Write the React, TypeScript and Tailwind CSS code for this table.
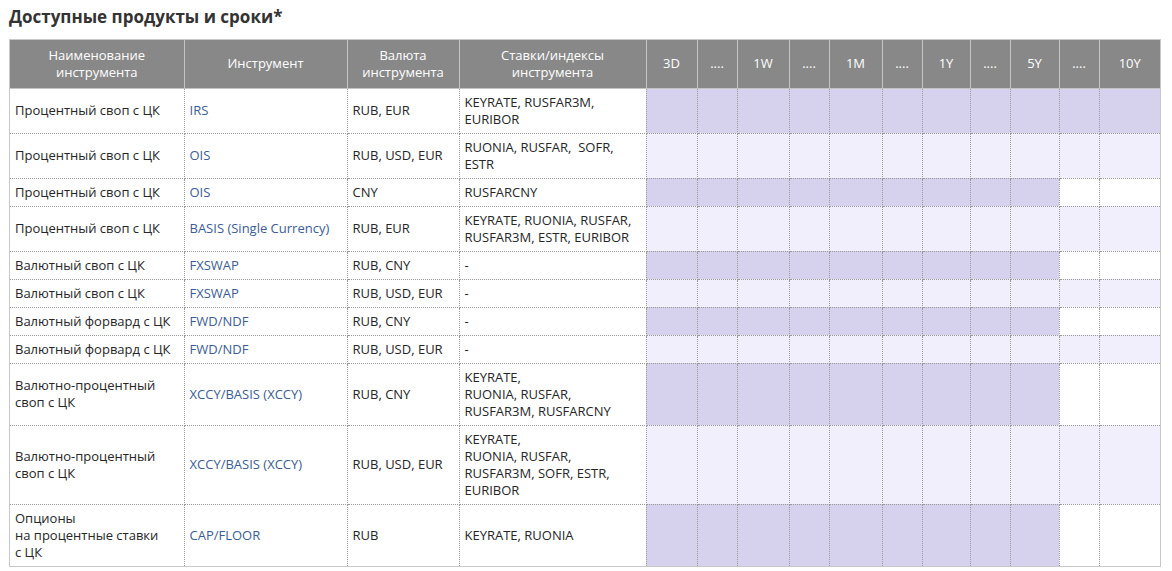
import React from 'react'

type Row = {
  name: string[]
  tool: string
  cur: string
  rates: string[]
  full: boolean // purple row with all tenors (incl. last two)
  shade: 'dark' | 'light'
}

const tenors = ['3D', '....', '1W', '....', '1M', '....', '1Y', '....', '5Y', '....', '10Y']
const tenorWidths = [51, 40, 52, 40, 53, 40, 48, 40, 49, 40, 61]

const rows: Row[] = [
  { name: ['Процентный своп с ЦК'], tool: 'IRS', cur: 'RUB, EUR', rates: ['KEYRATE, RUSFAR3M,', 'EURIBOR'], full: true, shade: 'dark' },
  { name: ['Процентный своп с ЦК'], tool: 'OIS', cur: 'RUB, USD, EUR', rates: ['RUONIA, RUSFAR,  SOFR,', 'ESTR'], full: true, shade: 'light' },
  { name: ['Процентный своп с ЦК'], tool: 'OIS', cur: 'CNY', rates: ['RUSFARCNY'], full: false, shade: 'dark' },
  { name: ['Процентный своп с ЦК'], tool: 'BASIS (Single Currency)', cur: 'RUB, EUR', rates: ['KEYRATE, RUONIA, RUSFAR,', 'RUSFAR3M, ESTR, EURIBOR'], full: true, shade: 'light' },
  { name: ['Валютный своп с ЦК'], tool: 'FXSWAP', cur: 'RUB, CNY', rates: ['-'], full: false, shade: 'dark' },
  { name: ['Валютный своп с ЦК'], tool: 'FXSWAP', cur: 'RUB, USD, EUR', rates: ['-'], full: true, shade: 'light' },
  { name: ['Валютный форвард с ЦК'], tool: 'FWD/NDF', cur: 'RUB, CNY', rates: ['-'], full: false, shade: 'dark' },
  { name: ['Валютный форвард с ЦК'], tool: 'FWD/NDF', cur: 'RUB, USD, EUR', rates: ['-'], full: true, shade: 'light' },
  { name: ['Валютно-процентный', 'своп с ЦК'], tool: 'XCCY/BASIS (XCCY)', cur: 'RUB, CNY', rates: ['KEYRATE,', 'RUONIA, RUSFAR,', 'RUSFAR3M, RUSFARCNY'], full: false, shade: 'dark' },
  { name: ['Валютно-процентный', 'своп с ЦК'], tool: 'XCCY/BASIS (XCCY)', cur: 'RUB, USD, EUR', rates: ['KEYRATE,', 'RUONIA, RUSFAR,', 'RUSFAR3M, SOFR, ESTR,', 'EURIBOR'], full: true, shade: 'light' },
  { name: ['Опционы', 'на процентные ставки', 'с ЦК'], tool: 'CAP/FLOOR', cur: 'RUB', rates: ['KEYRATE, RUONIA'], full: false, shade: 'dark' },
]

function Lines({ items }: { items: string[] }) {
  return (
    <>
      {items.map((l, i) => (
        <div key={i} className="whitespace-pre">{l}</div>
      ))}
    </>
  )
}

export default function App() {
  const th = 'border border-[#c4c4c4] font-normal text-white text-center align-middle px-1 py-[6px]'
  const td = 'border border-dotted border-[#9a9a9a] align-middle px-[5px] py-[5px]'

  return (
    <div className="w-[1172px] h-[571px] bg-white overflow-hidden text-[13px] leading-[17px] text-[#262626]" style={{ fontFamily: '"Open Sans", "Noto Sans", sans-serif' }}>
      <h2 className="text-[17px] leading-[24px] font-bold text-[#333] pl-[9px] pt-[5px] h-[39px]">Доступные продукты и сроки*</h2>

      <div className="ml-[9px] w-[1152px] border border-[#c8c8c8]">
        <table className="w-[1150px] table-fixed border-collapse">
          <colgroup>
            <col className="w-[174px]" />
            <col className="w-[163px]" />
            <col className="w-[112px]" />
            <col className="w-[187px]" />
            {tenorWidths.map((w, i) => (
              <col key={i} style={{ width: w }} />
            ))}
          </colgroup>
          <thead>
            <tr className="bg-[#888888] h-[48px]">
              <th className={th + ' border-l-0 border-t-0'}>Наименование<br />инструмента</th>
              <th className={th + ' border-t-0'}>Инструмент</th>
              <th className={th + ' border-t-0'}>Валюта<br />инструмента</th>
              <th className={th + ' border-t-0'}>Ставки/индексы<br />инструмента</th>
              {tenors.map((t, i) => (
                <th key={i} className={th + ' border-t-0' + (i === tenors.length - 1 ? ' border-r-0' : '')}>{t}</th>
              ))}
            </tr>
          </thead>
          <tbody>
            {rows.map((r, ri) => {
              const bg = r.shade === 'dark' ? 'bg-[#d6d2ee]' : 'bg-[#f1effc]'
              const last = ri === rows.length - 1
              const b = last ? ' border-b-0' : ''
              return (
                <tr key={ri}>
                  <td className={td + ' border-l-0' + b}><Lines items={r.name} /></td>
                  <td className={td + ' text-[#3b5d94]' + b}>{r.tool}</td>
                  <td className={td + b}>{r.cur}</td>
                  <td className={td + b}><Lines items={r.rates} /></td>
                  {tenors.map((_, ti) => {
                    const filled = r.full || ti < 9
                    return (
                      <td
                        key={ti}
                        className={td + b + ' ' + (filled ? bg : 'bg-white') + (ti === tenors.length - 1 ? ' border-r-0' : '')}
                      />
                    )
                  })}
                </tr>
              )
            })}
          </tbody>
        </table>
      </div>
    </div>
  )
}
